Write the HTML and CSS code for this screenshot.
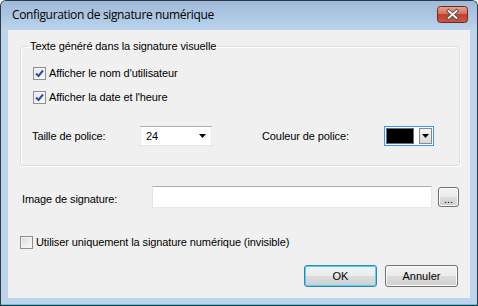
FILE: index.html
```html
<!DOCTYPE html>
<html lang="fr">
<head>
  <meta charset="UTF-8">
  <title>Configuration de signature numérique</title>
  <link rel="stylesheet" href="styles.css">
</head>
<body>
  <div class="window">
    <div class="titlebar">
      <span class="title">Configuration de signature numérique</span>
      <button class="close" title="Fermer">
        <svg width="31" height="17" viewBox="0 0 31 17">
          <defs>
            <linearGradient id="red" x1="0" y1="0" x2="0" y2="1">
              <stop offset="0" stop-color="#e8a493"/>
              <stop offset="0.45" stop-color="#d4705c"/>
              <stop offset="0.5" stop-color="#c2412b"/>
              <stop offset="1" stop-color="#d0573f"/>
            </linearGradient>
          </defs>
          <rect x="0.5" y="0.5" width="30" height="16" rx="3" fill="url(#red)" stroke="#6c2a20"/>
          <path d="M11.5 5 L19.5 12 M19.5 5 L11.5 12" stroke="#4a4a4a" stroke-width="3.6" stroke-linecap="square"/>
          <path d="M11.5 5 L19.5 12 M19.5 5 L11.5 12" stroke="#ffffff" stroke-width="1.8" stroke-linecap="square"/>
        </svg>
      </button>
    </div>

    <div class="client">
      <fieldset class="group">
        <legend>Texte généré dans la signature visuelle</legend>

        <label class="check">
          <span class="box checked"><svg width="9" height="9" viewBox="0 0 9 9"><path d="M1 4.5 L3.5 7 L8 1.5" fill="none" stroke="#2a4ea8" stroke-width="2"/></svg></span>
          Afficher le nom d'utilisateur
        </label>
        <label class="check">
          <span class="box checked"><svg width="9" height="9" viewBox="0 0 9 9"><path d="M1 4.5 L3.5 7 L8 1.5" fill="none" stroke="#2a4ea8" stroke-width="2"/></svg></span>
          Afficher la date et l'heure
        </label>

        <div class="font-row">
          <span class="size-label">Taille de police:</span>
          <div class="combo">
            <span>24</span>
            <svg width="7" height="4" viewBox="0 0 7 4"><path d="M0 0 H7 L3.5 4 Z" fill="#000"/></svg>
          </div>
          <span class="color-label">Couleur de police:</span>
          <div class="color-combo">
            <span class="swatch"></span>
            <span class="drop"><svg width="7" height="4" viewBox="0 0 7 4"><path d="M0 0 H7 L3.5 4 Z" fill="#000"/></svg></span>
          </div>
        </div>
      </fieldset>

      <div class="image-row">
        <span class="image-label">Image de signature:</span>
        <div class="textbox"></div>
        <button class="browse">...</button>
      </div>

      <label class="check only">
        <span class="box"></span>
        Utiliser uniquement la signature numérique (invisible)
      </label>

      <div class="actions">
        <button class="btn default">OK</button>
        <button class="btn">Annuler</button>
      </div>
    </div>
  </div>
</body>
</html>
```

FILE: styles.css
```css
* { box-sizing: border-box; }
body {
  margin: 0;
  font-family: 'Liberation Sans', Arial, sans-serif;
  font-size: 11px;
  letter-spacing: -0.1px;
  color: #000;
  background: #fff;
}
.window {
  width: 478px;
  height: 306px;
  background: #bcd4ee;
  border: 1px solid #2e3a46;
  border-bottom: none;
  border-radius: 6px 6px 0 0;
  display: flex;
  flex-direction: column;
  box-shadow: inset 0 -1px 0 #36353a, inset 0 -2px 0 #55c8e8;
}
.titlebar {
  height: 29px;
  display: flex;
  align-items: center;
  justify-content: space-between;
  padding: 0 9px 0 11px;
  background: linear-gradient(#9fbad8, #b2cbe6 70%, #bcd4ee);
  border-radius: 5px 5px 0 0;
}
.title {
  font-family: 'Open Sans', 'Noto Sans', sans-serif;
  font-size: 12px;
  letter-spacing: -0.35px;
  margin-top: -2px;
}
.close {
  width: 31px;
  height: 17px;
  padding: 0;
  border: none;
  background: none;
  margin-top: -3px;
}
.close svg { display: block; }
.client {
  margin: 0 7px;
  height: 268px;
  background: #f0f0f0;
  padding: 9px 10px 0 12px;
  display: flex;
  flex-direction: column;
}
.group {
  margin: 0;
  padding: 8px 12px 19px 12px;
  border: 1px solid #d5dfe5;
  border-radius: 3px;
  box-shadow: inset 1px 1px 0 #fff, 1px 1px 0 #fff;
}
.group legend {
  padding: 0 2px;
  margin-left: -5px;
  line-height: 14px;
}
.check {
  display: flex;
  align-items: center;
  height: 24px;
  gap: 3px;
}
.box {
  width: 13px;
  height: 13px;
  border: 1px solid #8f8f8f;
  background: linear-gradient(135deg, #dcdcdc, #fafafa);
  display: flex;
  align-items: center;
  justify-content: center;
  box-shadow: inset 0 0 0 1px #f4f4f4;
}
.box.checked {
  background: linear-gradient(135deg, #e4e6ea, #ffffff);
}
.box svg { display: block; }
.font-row {
  display: flex;
  align-items: center;
  height: 20px;
  margin-top: 17px;
  margin-left: -1px;
}
.size-label { width: 108px; }
.combo {
  width: 72px;
  height: 20px;
  background: #fff;
  border: 1px solid #e3e9ef;
  border-top-color: #abadb3;
  display: flex;
  align-items: center;
  justify-content: space-between;
  padding: 0 5px 0 5px;
}
.color-label {
  margin-left: 50px;
  width: 122px;
}
.color-combo {
  width: 50px;
  height: 20px;
  border: 1px solid #3399ff;
  background: #fff;
  display: flex;
  align-items: center;
  padding: 1px;
  gap: 5px;
}
.swatch {
  width: 29px;
  height: 16px;
  background: #000;
  border: 1px solid #6d6d6d;
}
.drop {
  width: 13px;
  height: 16px;
  border: 1px solid #8a8a8a;
  background: linear-gradient(#f4f4f4, #d8d8d8);
  display: flex;
  align-items: center;
  justify-content: center;
}
.drop svg, .combo svg { display: block; }
.image-row {
  display: flex;
  align-items: center;
  margin-top: 20px;
  height: 22px;
}
.image-label {
  width: 130px;
  margin-left: 2px;
  padding-top: 4px;
}
.textbox {
  width: 280px;
  height: 22px;
  background: #fff;
  border: 1px solid #e3e9ef;
  border-top-color: #abadb3;
  border-left-color: #e2e3ea;
}
.browse {
  width: 21px;
  height: 20px;
  margin-left: 6px;
  padding: 0 0 3px;
  font: inherit;
  line-height: 8px;
  display: flex;
  align-items: flex-end;
  justify-content: center;
  border: 1px solid #707070;
  border-radius: 3px;
  background: linear-gradient(#f2f2f2 0%, #ebebeb 50%, #dddddd 51%, #cfcfcf 100%);
  box-shadow: inset 0 0 0 1px #fcfcfc;
}
.check.only {
  margin-top: 22px;
  height: 24px;
}
.actions {
  display: flex;
  justify-content: flex-end;
  gap: 8px;
  margin-top: 11px;
  padding-right: 2px;
}
.btn {
  width: 73px;
  height: 22px;
  font: inherit;
  color: #000;
  border: 1px solid #707070;
  border-radius: 3px;
  background: linear-gradient(#f2f2f2 0%, #ebebeb 50%, #dddddd 51%, #cfcfcf 100%);
  box-shadow: inset 0 0 0 1px #fcfcfc;
}
.btn.default {
  border-color: #3c7fb1;
  box-shadow: inset 0 0 0 1px #48d7fb;
}
```
